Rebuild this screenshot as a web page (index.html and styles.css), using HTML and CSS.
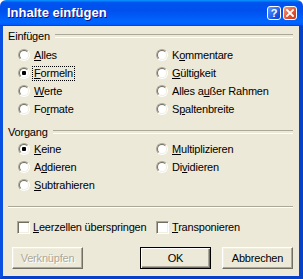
FILE: index.html
```html
<!DOCTYPE html>
<html lang="de">
<head>
<meta charset="utf-8">
<title>Inhalte einfügen</title>
<link rel="stylesheet" href="styles.css">
</head>
<body>
<div class="window">
  <div class="titlebar">
    <span class="title">Inhalte einfügen</span>
    <div class="tb-buttons">
      <span class="tb-btn help">?</span>
      <span class="tb-btn close"><svg width="8" height="8" viewBox="0 0 8 8"><path d="M1 1L7 7M7 1L1 7" stroke="#fff" stroke-width="1.8" stroke-linecap="square"/></svg></span>
    </div>
  </div>
  <div class="frame">
    <div class="group-head"><span>Einfügen</span></div>
    <div class="options">
      <div class="opt"><span class="radio"></span><span class="lbl"><u>A</u>lles</span></div>
      <div class="opt"><span class="radio"></span><span class="lbl">K<u>o</u>mmentare</span></div>
      <div class="opt"><span class="radio checked"></span><span class="lbl focus"><u>F</u>ormeln</span></div>
      <div class="opt"><span class="radio"></span><span class="lbl"><u>G</u>ültigkeit</span></div>
      <div class="opt"><span class="radio"></span><span class="lbl"><u>W</u>erte</span></div>
      <div class="opt"><span class="radio"></span><span class="lbl">Alles a<u>u</u>ßer Rahmen</span></div>
      <div class="opt"><span class="radio"></span><span class="lbl">Fo<u>r</u>mate</span></div>
      <div class="opt"><span class="radio"></span><span class="lbl">S<u>p</u>altenbreite</span></div>
    </div>
    <div class="group-head second"><span>Vorgang</span></div>
    <div class="options">
      <div class="opt"><span class="radio checked"></span><span class="lbl"><u>K</u>eine</span></div>
      <div class="opt"><span class="radio"></span><span class="lbl"><u>M</u>ultiplizieren</span></div>
      <div class="opt"><span class="radio"></span><span class="lbl">A<u>d</u>dieren</span></div>
      <div class="opt"><span class="radio"></span><span class="lbl">Di<u>v</u>idieren</span></div>
      <div class="opt"><span class="radio"></span><span class="lbl"><u>S</u>ubtrahieren</span></div>
    </div>
    <div class="separator"></div>
    <div class="checks">
      <div class="opt"><span class="checkbox"></span><span class="lbl"><u>L</u>eerzellen überspringen</span></div>
      <div class="opt"><span class="checkbox"></span><span class="lbl"><u>T</u>ransponieren</span></div>
    </div>
    <div class="buttons">
      <span class="btn disabled">Verknüpfen</span>
      <span class="btn default">OK</span>
      <span class="btn">Abbrechen</span>
    </div>
  </div>
</div>
</body>
</html>
```

FILE: styles.css
```css
* { box-sizing: border-box; }
html, body { margin: 0; padding: 0; background: #fff; }
body {
  font-family: "Liberation Sans", Arial, sans-serif;
  font-size: 11px;
  letter-spacing: -0.2px;
  color: #000;
}
.window {
  width: 303px;
  height: 279px;
  display: flex;
  flex-direction: column;
}
.titlebar {
  height: 26px;
  flex: none;
  display: flex;
  align-items: center;
  justify-content: space-between;
  padding: 0 6px 1px 7px;
  border-radius: 6px 6px 0 0;
  background: linear-gradient(180deg, #0997ff 0%, #0053ee 10%, #0050ee 40%, #0066ff 85%, #005bff 94%, #003dd7 100%);
}
.title {
  color: #fff;
  font-weight: bold;
  font-size: 13px;
  letter-spacing: 0;
  text-shadow: 1px 1px #0f1089;
}
.tb-buttons { display: flex; gap: 2px; }
.tb-btn {
  width: 14px;
  height: 14px;
  border: 1px solid #fff;
  border-radius: 3px;
  display: flex;
  align-items: center;
  justify-content: center;
  color: #fff;
  font-weight: bold;
  font-size: 11px;
  letter-spacing: 0;
}
.help { background: linear-gradient(135deg, #5f9bff, #1553e6 70%, #0b3fcf); }
.close { background: linear-gradient(135deg, #f39a7e, #e0522f 60%, #c53a1c); }
.frame {
  flex: 1;
  background: #ece9d8;
  border-left: 3px solid #0a50e0;
  border-right: 4px solid #0841c9;
  border-bottom: 3px solid #0841c9;
  padding: 3px 6px 0 5px;
  display: flex;
  flex-direction: column;
}
.group-head {
  height: 14px;
  display: flex;
  align-items: center;
}
.group-head::after {
  content: "";
  flex: 1;
  height: 2px;
  margin-left: 5px;
  border-top: 1px solid #aca899;
  border-bottom: 1px solid #fff;
}
.group-head.second { margin-top: 7px; }
.options {
  display: grid;
  grid-template-columns: 138px 1fr;
  grid-auto-rows: 18px;
  padding-left: 10px;
  margin-top: 3px;
}
.group-head.second + .options { margin-top: 1px; }
.opt {
  display: flex;
  align-items: center;
}
.radio {
  width: 12px;
  height: 12px;
  border-radius: 50%;
  border: 1px solid;
  border-color: #aca899 #fff #fff #aca899;
  position: relative;
  flex: none;
  margin-right: 3px;
}
.radio::before {
  content: "";
  position: absolute;
  inset: 0;
  border-radius: 50%;
  border: 1px solid;
  border-color: #716f64 #f1efe2 #f1efe2 #716f64;
  background: #fff;
}
.radio.checked::after {
  content: "";
  position: absolute;
  left: 3px;
  top: 3px;
  width: 4px;
  height: 4px;
  border-radius: 1px;
  background: #000;
}
.lbl { padding: 0 1px; line-height: 13px; }
.lbl.focus { outline: 1px dotted #000; outline-offset: 0; }
.separator {
  margin-top: 12px;
  height: 2px;
  border-top: 1px solid #aca899;
  border-bottom: 1px solid #fff;
}
.checks {
  margin-top: 10px;
  height: 18px;
  display: grid;
  grid-template-columns: 139px 1fr;
  padding-left: 9px;
}
.checkbox {
  width: 13px;
  height: 13px;
  border: 1px solid;
  border-color: #aca899 #fff #fff #aca899;
  background: #fff;
  box-shadow: inset 1px 1px #716f64, inset -1px -1px #f1efe2;
  flex: none;
  margin-right: 2px;
}
.buttons {
  margin-top: 11px;
  display: flex;
  gap: 11px;
  padding-left: 4px;
}
.btn {
  width: 71px;
  height: 22px;
  display: flex;
  align-items: center;
  justify-content: center;
  background: #ece9d8;
  border: 1px solid;
  border-color: #fff #716f64 #716f64 #fff;
  box-shadow: inset -1px -1px #aca899, inset 1px 1px #f1efe2;
}
.btn.disabled {
  margin-right: auto;
  color: #aca899;
  text-shadow: 1px 1px #fff;
}
.btn.default {
  border-color: #000;
  box-shadow: inset 1px 1px #fff, inset -1px -1px #716f64, inset -2px -2px #aca899;
}
```
